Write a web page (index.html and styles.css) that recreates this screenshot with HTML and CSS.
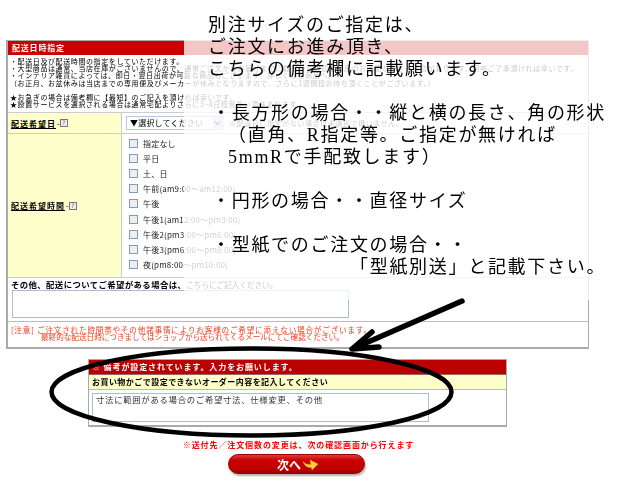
FILE: index.html
```html
<!DOCTYPE html>
<html lang="ja">
<head>
  <meta charset="UTF-8" />
  <title>配送日時指定</title>
  <link rel="stylesheet" href="styles.css">
</head>
<body>

  <div class="page">
    <!-- 配送日時 -->
    <div class="panel">
      <h2 class="panel-title">配送日時指定</h2>
      <div class="notes">
        <p>・配送日及び配送時間の指定をしていただけます。</p>
        <p>・大型商品は通常、当店在庫がございませんので、通常ご注文からお届けまでに数日から数週間程度のお時間がかかる場合があります。何卒ご了承頂ければ幸いです。</p>
        <p>・インテリア雑貨によっては、即日・翌日出荷が可能な商品もございます。詳しくは各商品へ。</p>
        <p>（お正月、お盆休みは当店までの専用便及びメーカーが休みとなりますので、さらに1週間程お待ち頂くことがございます。）</p>
        <p>&nbsp;</p>
        <p>★お急ぎの場合は備考欄に【最短】のご記入を頂ければ幸いです。</p>
        <p>★設置サービスを選択される場合は通常宅配よりさらに3~4日程度長い頂きあります。</p>
      </div>

      <div class="row row-date">
        <div class="row-label"><a class="label-link">配送希望日</a><span class="dash">-</span><span class="help">?</span></div>
        <div class="row-body date-body">
          <div class="select">
            <span class="select-text">▼選択してください</span>
            <svg class="select-arrow" width="9" height="12" viewBox="0 0 9 12">
              <rect width="9" height="12" fill="#d5dfec"/>
              <path d="M2 4.5 L4.5 7.5 L7 4.5" fill="none" stroke="#4d6185" stroke-width="1.5"/>
            </svg>
          </div>
          <span class="hint">※配達日に指定がない場合は未選択で構いません。</span>
        </div>
      </div>

      <div class="row row-time">
        <div class="row-label"><a class="label-link">配送希望時間</a><span class="dash">-</span><span class="help">?</span></div>
        <div class="row-body time-list">
          <label class="check"><i></i>指定なし</label>
          <label class="check"><i></i>平日</label>
          <label class="check"><i></i>土、日</label>
          <label class="check"><i></i>午前(am9:00～am12:00)</label>
          <label class="check"><i></i>午後</label>
          <label class="check"><i></i>午後1(am12:00～pm3:00)</label>
          <label class="check"><i></i>午後2(pm3:00～pm6:00)</label>
          <label class="check"><i></i>午後3(pm6:00～pm8:00)</label>
          <label class="check"><i></i>夜(pm8:00～pm10:00)</label>
        </div>
      </div>

      <div class="other">
        <p class="other-title">その他、配送についてご希望がある場合は、<span class="other-rest">こちらにご記入ください。</span></p>
        <div class="textbox other-box"></div>
      </div>

      <div class="caution">
        <p class="caution-main">[注意] ご注文された時間帯やその他諸事情によりお客様のご希望に添えない場合がございます。</p>
        <p class="caution-sub">最終的な配送日時につきましてはショップから送られてくるメールにてご確認ください。</p>
      </div>
    </div>

    <!-- 備考 -->
    <div class="remark">
      <div class="remark-title">※ 備考が設定されています。入力をお願いします。</div>
      <div class="remark-sub">お買い物かごで設定できないオーダー内容を記入してください</div>
      <div class="remark-body">
        <div class="textbox remark-box">寸法に範囲がある場合のご希望寸法、仕様変更、その他</div>
      </div>
    </div>

    <p class="change-note">※送付先／注文個数の変更は、次の確認画面から行えます</p>

    <button type="button" class="btn-next">次へ
      <svg class="btn-arrow" width="17" height="14" viewBox="0 0 17 14">
        <path d="M1 4.5 Q3 8 9 7.5 L8 3 L16 7 L10 13 L9.5 10.5 Q3 11 1 4.5 Z" fill="#ffd23c" stroke="#f0a020" stroke-width=".6"/>
      </svg>
    </button>
  </div>

  <!-- 上に貼られた説明 -->
  <div class="sheet">
    <p>別注サイズのご指定は、</p>
    <p>ご注文にお進み頂き、</p>
    <p>こちらの備考欄に記載願います。</p>
    <p>&nbsp;</p>
    <p class="in-bullet">・長方形の場合・・縦と横の長さ、角の形状</p>
    <p class="in-paren">（直角、R指定等。ご指定が無ければ</p>
    <p class="in-size">5mmRで手配致します）</p>
    <p>&nbsp;</p>
    <p class="in-bullet">・円形の場合・・直径サイズ</p>
    <p>&nbsp;</p>
    <p class="in-bullet">・型紙でのご注文の場合・・</p>
    <p class="in-last">「型紙別送」と記載下さい。</p>
  </div>

  <svg class="marks" width="621" height="497" viewBox="0 0 621 497">
    <ellipse cx="251.5" cy="392" rx="200" ry="43.5" fill="none" stroke="#000" stroke-width="4.5"/>
    <path d="M462 301 L352 349 M372 332 L352 349 L379 347" fill="none" stroke="#000" stroke-width="5.5" stroke-linecap="round" stroke-linejoin="round"/>
  </svg>

</body>
</html>
```

FILE: styles.css
```css
html, body {
  margin: 0;
  height: 497px;
  overflow: hidden;
  background-color: white;
}
body {
  font-family: "Noto Sans CJK JP", "Liberation Sans", sans-serif;
  color: #222;
}
p {
  margin: 0;
}
.page {
  padding-top: 40px;
  filter: blur(0.35px);
}

.panel {
  width: 580px;
  margin-left: 6px;
  border: 2px solid #aaa;
  border-top-width: 1px;
  border-right-width: 1px;
}
.panel-title {
  margin: 0;
  height: 14px;
  padding-left: 4px;
  background-color: #c00;
  color: white;
  font-size: 8px;
  line-height: 14px;
  letter-spacing: 0.8px;
  font-weight: bold;
}
.notes {
  height: 57px;
  padding-top: 3px;
  box-sizing: border-box;
  padding-left: 2px;
  color: #000;
  font-size: 7px;
  line-height: 7.2px;
  letter-spacing: 0.6px;
  white-space: nowrap;
  overflow: hidden;
}

.row {
  display: flex;
  border-top: 1px solid #ccc;
}
.row-date {
  height: 20px;
}
.row-time {
  height: 143px;
}
.row-label {
  width: 114px;
  flex: none;
  display: flex;
  align-items: center;
  padding-left: 3px;
  box-sizing: border-box;
  background-color: #ffc;
  border-right: 1px solid #ccc;
  font-size: 8px;
  font-weight: bold;
  letter-spacing: 1px;
  color: #000;
}
.label-link {
  text-decoration: underline;
}
.dash {
  margin-left: 1px;
  font-weight: normal;
  letter-spacing: 0;
}
.help {
  width: 6px;
  height: 6px;
  border: 1px solid #777;
  background-color: #eee;
  color: #555;
  font-size: 6px;
  line-height: 6px;
  letter-spacing: 0;
  text-align: center;
  font-weight: normal;
}
.date-body {
  display: flex;
  align-items: center;
  gap: 6px;
  padding-left: 4px;
}
.select {
  display: flex;
  width: 97px;
  height: 14px;
  box-sizing: border-box;
  border: 1px solid #b5c7dc;
  padding-left: 3px;
  color: #000;
  font-size: 8px;
  line-height: 12px;
  letter-spacing: 0.2px;
  white-space: nowrap;
}
.select-text {
  flex: 1;
  overflow: hidden;
}
.hint {
  font-size: 7px;
  letter-spacing: 0.6px;
  white-space: nowrap;
}
.time-list {
  display: flex;
  flex-direction: column;
  padding: 2px 0 0 7px;
}
.check {
  display: flex;
  align-items: center;
  height: 15.1px;
  font-size: 8px;
  letter-spacing: 0.2px;
  white-space: nowrap;
}
.check i {
  width: 7px;
  height: 7px;
  margin-right: 5px;
  border: 1px solid #7f9db9;
  background-color: #eee;
}

.other {
  height: 44px;
  border-top: 1px solid #ccc;
  padding-left: 3px;
  box-sizing: border-box;
}
.other-title {
  height: 12px;
  font-size: 8.4px;
  line-height: 12px;
  letter-spacing: 0.4px;
  font-weight: bold;
  color: #000;
  white-space: nowrap;
}
.other-rest {
  font-size: 7.6px;
  letter-spacing: 0;
  font-weight: normal;
}
.textbox {
  box-sizing: border-box;
  border: 1px solid #a9bdd4;
  background-color: white;
}
.other-box {
  width: 337px;
  height: 28px;
  margin-left: 1px;
}
.caution {
  height: 26px;
  border-top: 1px solid #bbb;
  box-sizing: border-box;
  padding: 4px 0 0 3px;
  color: #f53c1e;
  font-size: 7.6px;
  line-height: 7.4px;
  white-space: nowrap;
}
.caution-main {
  letter-spacing: 0.8px;
}
.caution-sub {
  padding-left: 30px;
}

.remark {
  width: 417px;
  margin: 10px 0 0 88px;
  border: 2px solid #aaa;
  border-top-width: 1px;
  border-left-width: 1px;
  border-right-width: 1px;
}
.remark-title {
  height: 14px;
  padding-left: 3px;
  background-color: #b00;
  border-bottom: 1px solid #966;
  color: white;
  font-size: 8px;
  font-weight: bold;
  line-height: 14px;
  letter-spacing: 0.9px;
}
.remark-sub {
  height: 14px;
  padding-left: 3px;
  background-color: #ffc;
  border-bottom: 1px solid #bbb;
  color: #000;
  font-size: 8px;
  font-weight: bold;
  line-height: 14px;
  letter-spacing: 0.45px;
}
.remark-body {
  padding: 3px 0 3px 3px;
}
.remark-box {
  width: 337px;
  height: 29px;
  padding: 0 0 0 3px;
  font-size: 8.4px;
  line-height: 10px;
  letter-spacing: 0.7px;
  color: #333;
}
.change-note {
  margin-top: 12px;
  height: 12px;
  text-align: center;
  color: #f00;
  font-size: 8px;
  font-weight: bold;
  line-height: 12px;
  letter-spacing: 0.9px;
  padding-right: 24px;
}
.btn-next {
  display: flex;
  align-items: center;
  justify-content: center;
  gap: 1px;
  width: 137px;
  height: 20px;
  margin: 3px 0 0 228px;
  padding: 0 0 0 3px;
  border: 1px solid #900;
  border-radius: 10px;
  background: linear-gradient(#e23a3a, #c80000 30%, #c00000 80%, #a00000);
  box-shadow: 1px 2px 2px rgba(0,0,0,0.3);
  color: white;
  font-family: inherit;
  font-size: 12px;
  font-weight: bold;
}

/* 上に貼られた半透明の紙 */
.sheet {
  position: absolute;
  left: 184px;
  top: 0;
  width: 437px;
  height: 300px;
  box-sizing: border-box;
  padding: 14px 0 0 24px;
  background-color: rgba(255,255,255,0.78);
  font-family: "Liberation Serif", "Noto Sans CJK JP", serif;
  font-size: 18px;
  line-height: 22px;
  letter-spacing: 1.7px;
  color: #000;
  white-space: nowrap;
}
.in-bullet {
  padding-left: 4px;
}
.in-paren {
  padding-left: 20px;
}
.in-size {
  padding-left: 20px;
}
.in-last {
  padding-left: 142px;
}
.marks {
  position: absolute;
  left: 0;
  top: 0;
}
```
